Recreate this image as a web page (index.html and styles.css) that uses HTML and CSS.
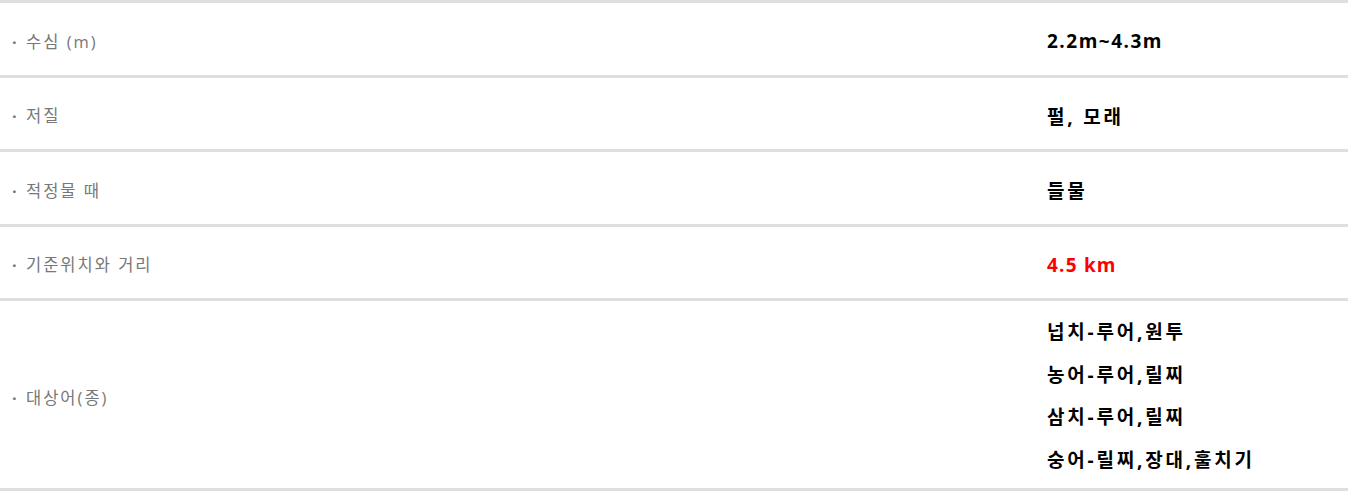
FILE: index.html
```html
<!DOCTYPE html>
<html lang="ko">
<head>
<meta charset="utf-8">
<link rel="stylesheet" href="styles.css">
</head>
<body>
<div class="info">
  <div class="row">
    <div class="label"><span class="dot">·</span>수심 (m)</div>
    <div class="value num">2.2m~4.3m</div>
  </div>
  <div class="row">
    <div class="label"><span class="dot">·</span>저질</div>
    <div class="value">펄, 모래</div>
  </div>
  <div class="row">
    <div class="label"><span class="dot">·</span>적정물 때</div>
    <div class="value">들물</div>
  </div>
  <div class="row">
    <div class="label"><span class="dot">·</span>기준위치와 거리</div>
    <div class="value num red">4.5 km</div>
  </div>
  <div class="row tall">
    <div class="label"><span class="dot">·</span>대상어(종)</div>
    <div class="value list">
      <p>넙치-루어,원투</p>
      <p>농어-루어,릴찌</p>
      <p>삼치-루어,릴찌</p>
      <p>숭어-릴찌,장대,훌치기</p>
    </div>
  </div>
</div>
</body>
</html>
```

FILE: styles.css
```css
html, body {
  margin: 0;
  padding: 0;
  background: #fff;
}
body {
  font-family: "Open Sans", "Noto Sans CJK KR", sans-serif;
}
.info {
  border-bottom: 3px solid #dedede;
}
.row {
  display: grid;
  grid-template-columns: 1fr 301px;
  align-items: center;
  height: 71.5px;
  border-top: 3px solid #dedede;
}
.row.tall {
  height: 187px;
}
.label {
  padding-left: 12px;
  font-size: 16.5px;
  letter-spacing: 2px;
  color: #777;
  padding-top: 4px;
}
.dot {
  display: inline-block;
  width: 14px;
  font-weight: bold;
  letter-spacing: 0;
}
.value {
  font-size: 19px;
  font-weight: bold;
  letter-spacing: 2.8px;
  color: #000;
  padding-top: 5px;
}
.value.num {
  letter-spacing: 1.5px;
}
.value.red {
  color: #ff0000;
  letter-spacing: 1.2px;
}
.value.list {
  padding-top: 3px;
}
.value.list p {
  margin: 0;
  line-height: 42.5px;
}
```
